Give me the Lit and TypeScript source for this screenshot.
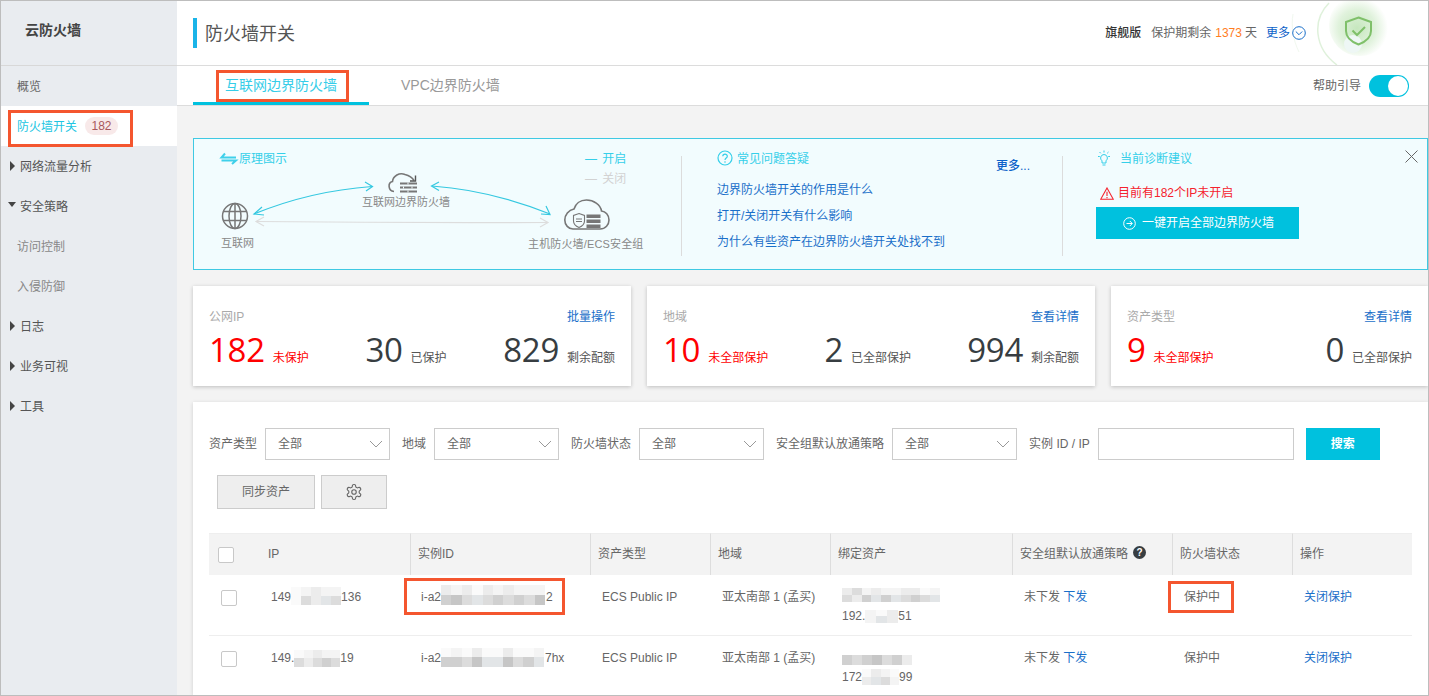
import { LitElement, html, css, svg } from "lit";
import { customElement } from "lit/decorators.js";

const mosaic = (w: number, h: number, rows: string[][], dy = 0) => html`<span class="mosaic" style="width:${w}px;height:${h}px;transform:translateY(${dy}px);grid-template-columns:repeat(${rows[0].length},1fr)">${rows.flat().map((c) => html`<i style="background:${c}"></i>`)}</span>`;

const chevron = html`<svg class="chev" viewBox="0 0 14 8" width="14" height="8"><path d="M1 1l6 6 6-6" fill="none" stroke="#999" stroke-width="1"/></svg>`;

const diagram = svg`
  <path d="M225 153.5 L221.5 157.5 H236" fill="none" stroke="#3fd0ea" stroke-width="2"/>
  <path d="M221.5 160.5 H236 L232 164" fill="none" stroke="#3fd0ea" stroke-width="2"/>
  <g fill="none" stroke="#777" stroke-width="1.5">
    <circle cx="235" cy="216" r="12.5"/>
    <ellipse cx="235" cy="216" rx="6" ry="12.5"/>
    <path d="M235 203.5V228.5M223 211.5H247M223 220.5H247"/>
  </g>
  <path d="M394 191.5C388 191 387.5 182.5 392.5 181.5C393 176 399.5 172 405 174.5C409 175.5 412 177 414 180.5" fill="none" stroke="#777" stroke-width="1.6"/>
  <path d="M415.5 175.5V181H410" fill="none" stroke="#555" stroke-width="1.4"/>
  <path d="M400 183.5H417M400 187.5H417M400 191.5H417" stroke="#777" stroke-width="1.8"/>
  <path d="M408 182.5V184.5M403.5 186.5V188.5M412 186.5V188.5M408 190.5V192.5" stroke="#f2fcfe" stroke-width="1"/>
  <g fill="none" stroke="#35c8e0" stroke-width="1.2">
    <path d="M254 214Q310 191 372 186.5"/><path d="M365 182L372.5 186.5L366 191"/><path d="M262 207L254 214L264 215"/>
    <path d="M432 186Q490 190 550 214"/><path d="M439 182L431.5 186L439 190.5"/><path d="M541 214L550 214.5L546 206"/>
  </g>
  <g fill="none" stroke="#ddd" stroke-width="1.2">
    <path d="M256 221.5Q400 223 548 222.5"/><path d="M264 217L256 221.5L264 226"/><path d="M540 218L548 222.5L540 227"/>
  </g>
  <path d="M573 229H600C605.5 229 609 224.5 609 220C609 215 605.5 211.5 601.5 211C600.5 204.5 593.5 200 586.5 200C580 200 575.5 204 574 209C568.5 210 564.8 215 564.8 220C564.8 225 568.5 229 573 229Z" fill="none" stroke="#777" stroke-width="1.6"/>
  <path d="M579 213.5L584.5 215.5V221C584.5 224.5 581.5 226.5 579 227.5C576.5 226.5 573.5 224.5 573.5 221V215.5Z" fill="none" stroke="#777" stroke-width="1.1"/>
  <path d="M576 219H582M576 221.5H582" stroke="#777" stroke-width="1"/>
  <path d="M586.5 214.5H600.5V218H586.5ZM586.5 219.5H600.5V223H586.5ZM586.5 224.5H600.5V228H586.5Z" fill="#777"/>
`;

type Stat = { n: string; t: string; red?: boolean };

@customElement("app-root")
export class AppRoot extends LitElement {
  static styles = css`
    :host { display: flex; position: relative; width: 1429px; height: 696px; box-sizing: border-box; border: 1px solid #bdbdbd; overflow: hidden; background: #f3f3f3; font: 12px/18px "Liberation Sans", "Noto Sans CJK SC", sans-serif; color: #666; }
    * { box-sizing: border-box; }
    a { color: #1a6fc9; text-decoration: none; }
    svg { display: block; flex: none; }

    .side { width: 176px; flex: none; background: #e9ecf0; }
    .brand { height: 65px; border-bottom: 1px solid #d8d8d8; padding: 19px 0 0 24px; font-size: 14px; font-weight: 700; color: #444; line-height: 20px; }
    .nav { height: 40px; display: flex; align-items: center; padding: 2px 0 0 16px; color: #666; }
    .nav.sub { color: #888; }
    .nav.on { background: #fff; color: #20c5e2; }
    .nav.tree { padding-left: 9px; color: #555; }
    .caret-r { border-left: 5px solid #444; border-top: 5px solid transparent; border-bottom: 5px solid transparent; margin: -2px 5px 0 0; }
    .caret-d { border-top: 5px solid #444; border-left: 4px solid transparent; border-right: 4px solid transparent; margin: -6px 4px 0 -2px; }
    .badge { margin: -2px 0 0 8px; width: 33px; height: 18px; border-radius: 9px; background: #f8e9e9; color: #a8585c; text-align: center; font-size: 12px; }

    .main { flex: 1; min-width: 0; display: flex; flex-direction: column; }
    .head { height: 65px; flex: none; position: relative; background: #fff; border-bottom: 1px solid #dcdcdc; display: flex; align-items: center; padding: 0 122px 1px 16px; }
    .bar { width: 4px; height: 30px; background: #1ab4e8; margin-right: 8px; }
    .title { font-size: 18px; color: #555; flex: 1; line-height: 30px; padding-top: 2px; }
    .ver { color: #333; font-weight: 500; margin-right: 10px; }
    .days { color: #ff7d1f; margin: 0 3px 0 4px; }
    .more { margin: 0 2px 0 9px; color: #0d62c9; position: relative; z-index: 1; }
    .icon-more { position: relative; z-index: 1; }
    .shield { position: absolute; right: 0; top: 0; }

    .tabs { height: 40px; flex: none; background: #fff; border-bottom: 1px solid #dcdcdc; display: flex; padding: 0 19px 0 16px; }
    .tab { height: 39px; padding: 2px 32px 0; display: flex; align-items: center; font-size: 14px; color: #999; border-bottom: 3px solid transparent; }
    .tab.on { color: #35cde8; border-bottom-color: #00c1de; }
    .help { margin-left: auto; display: flex; align-items: center; gap: 8px; }
    .toggle { width: 40px; height: 22px; border-radius: 11px; background: #00c1de; display: flex; justify-content: flex-end; padding: 1px; }
    .toggle i { width: 20px; height: 20px; border-radius: 50%; background: #fff; }

    .body { flex: 1; min-height: 0; padding: 32px 0 0 16px; display: flex; flex-direction: column; gap: 16px; }

    .notice { height: 132px; flex: none; background: #f2fcfe; border: 1px solid #3fc9e3; display: flex; padding-top: 11px; color: #999; }
    .dia { width: 487px; height: 120px; margin-top: -11px; position: relative; flex: none; }
    .dia svg { position: absolute; left: 0; top: 0; }
    .dia span { position: absolute; white-space: nowrap; font-size: 11px; line-height: 14px; color: #888; }
    .dia .h { left: 45px; top: 12px; font-size: 12px; line-height: 16px; color: #35cfe9; }
    .dia .lg1 { left: 391px; top: 12px; font-size: 12px; line-height: 16px; color: #35cfe9; word-spacing: 2px; }
    .dia .lg2 { left: 391px; top: 32px; font-size: 12px; line-height: 16px; color: #d2d2d2; word-spacing: 2px; }
    .dia .l1 { left: 27px; top: 97px; }
    .dia .l2 { left: 168px; top: 56px; }
    .dia .l3 { left: 334px; top: 98px; letter-spacing: .15px; }
    .vline { width: 1px; height: 100px; margin-top: 6px; background: #dcdcdc; flex: none; }
    .faq { width: 380px; flex: none; padding: 0 32px 0 35px; }
    .hd { display: flex; align-items: flex-start; height: 16px; line-height: 18px; color: #35cfe9; }
    .hd svg { margin-right: 4px; }
    .hd .bulb { margin: 0 9px 0 1px; }
    .moreq { margin: 7px 0 0 auto; color: #0d62c9; font-weight: 500; }
    .links { display: flex; flex-direction: column; gap: 8px; margin-top: 15px; }
    .diag { padding-left: 33px; width: 240px; flex: none; }
    .warn { display: flex; align-items: center; gap: 4px; color: #f5222d; margin: 18px 0 0 4px; height: 18px; }
    .fix { margin-top: 5px; width: 203px; height: 32px; background: #00c1de; color: #fff; display: flex; align-items: center; padding-left: 27px; gap: 6px; }
    .close { margin: 0 9px 0 auto; }

    .stats { display: flex; gap: 16px; flex: none; height: 100px; }
    .card { background: #fff; box-shadow: 0 1px 4px rgba(0,0,0,.22); padding: 22px 16px 0; }
    .c1 { width: 438px; } .c2 { width: 448px; } .c3 { width: 317px; flex: 1; }
    .ct { display: flex; justify-content: space-between; color: #aaa; height: 18px; }
    .nums { display: flex; justify-content: space-between; margin-top: 3px; }
    .num { display: flex; align-items: baseline; gap: 8px; color: #555; white-space: nowrap; }
    .num b { font: 400 33px/42px "Open Sans", sans-serif; letter-spacing: -.3px; color: #373d41; }
    .num.red, .num.red b { color: #f00; }

    .table { flex: 1; min-height: 0; background: #fff; box-shadow: 0 1px 4px rgba(0,0,0,.15); padding: 26px 16px 0; overflow: hidden; }
    .filters { display: flex; gap: 12px; align-items: center; height: 32px; white-space: nowrap; }
    .fld { display: flex; gap: 8px; align-items: center; }
    .sel { width: 125px; height: 32px; border: 1px solid #ccc; display: flex; align-items: center; justify-content: space-between; padding: 0 6px 0 12px; background: #fff; }
    .inp { width: 196px; height: 32px; border: 1px solid #ccc; background: #fff; }
    .go { width: 74px; height: 32px; background: #00c1de; color: #fff; font-weight: 700; display: flex; align-items: center; justify-content: center; }
    .acts { display: flex; gap: 6px; margin: 15px 0 0 8px; }
    .btn { height: 34px; width: 98px; background: #eee; border: 1px solid #ccc; display: flex; align-items: center; justify-content: center; color: #666; }
    .btn.g { width: 66px; }
    .grid { display: grid; grid-template-columns: 51px 150px 180px 120px 120px 182px 160px 120px 120px; margin-top: 24px; }
    .th { height: 42px; background: #f3f3f3; border-top: 1px solid #eee; border-left: 1px solid #ddd; padding: 0 0 2px 7px; display: flex; align-items: center; color: #666; gap: 5px; }
    .th.first { border-left: 0; padding: 0 0 0 9px; }
    .th.ip { border-left: 0; padding-left: 8px; }
    .td { height: 61px; border-bottom: 1px solid #eee; padding: 13px 0 0 12px; color: #666; }
    .td.ck { padding-left: 12px; padding-top: 15px; }
    .td.ipc, .td.idc { padding-left: 11px; }
    .ln { display: flex; align-items: center; height: 18px; white-space: nowrap; }
    .ln + .ln { margin-top: 1px; }
    .gap { margin-left: 1px; }
    .cb { width: 16px; height: 16px; border: 1px solid #c8c8c8; border-radius: 2px; background: #fff; }
    .mosaic { display: inline-grid; flex: none; grid-auto-rows: 1fr; }
    .mosaic i { display: block; }
    .qm { width: 13px; height: 13px; border-radius: 50%; background: #373d41; color: #fff; font: 700 10px/13px "Liberation Sans", sans-serif; text-align: center; margin-top: -3px; }

    .mark { position: absolute; border: 3px solid #f4562f; pointer-events: none; }
    .m1 { left: 215px; top: 69px; width: 133px; height: 32px; }
    .m2 { left: 7px; top: 109px; width: 125px; height: 37px; }
    .m3 { left: 403px; top: 577px; width: 161px; height: 37px; }
    .m4 { left: 1167px; top: 580px; width: 66px; height: 32px; }
  `;

  private stat(s: Stat) {
    return html`<div class="num ${s.red ? "red" : ""}"><b>${s.n}</b><span>${s.t}</span></div>`;
  }

  render() {
    const g1 = "#f4f4f4", g2 = "#ececec", d1 = "#dcdcdc", d2 = "#d0d0d0", d3 = "#e2e5e7", d4 = "#c6c6c6", w = "#fafafa";
    const rows = [
      {
        ip: html`149${mosaic(50, 18, [[w, g1, g2, g1, g1], [w, d1, g2, d3, d1]], -1)}136`,
        id: html`i-a2${mosaic(104, 20, [[g2, g1, g2, w, g2, g1, g2, g1, g1, g1], [d2, d4, d1, d3, d1, d2, d1, d2, d1, d4]], -2)}<span class="gap">2</span>`,
        b1: mosaic(98, 14, [[g2, d1, g1, g2, g1, g1, g2, g2, w, g1], [d1, g2, d2, d3, d2, d3, d1, d2, d1, d3]], -2),
        b2: html`192.${mosaic(33, 13, [[g1, w, g2], [g1, d3, g2]], 0)}51`,
      },
      {
        ip: html`149.${mosaic(46, 17, [[w, g1, g2, g1, g1], [d1, g2, d1, d2, d1]], 0)}19`,
        id: html`i-a2${mosaic(103, 19, [[w, g1, w, g2, w, w, g2, w, w, g1], [d2, d2, d1, d4, d3, d3, d4, d1, d2, d3]], -1)}<span class="gap">7hx</span>`,
        b1: mosaic(70, 10, [[d2, d1, d2, d4, d1, d2, g2]], 2),
        b2: html`172${mosaic(37, 16, [[w, g2, g1, w], [g2, d3, d1, g1]], 0)}99`,
      },
    ];
    return html`
      <aside class="side">
        <div class="brand">云防火墙</div>
        <div class="nav">概览</div>
        <div class="nav on">防火墙开关<span class="badge">182</span></div>
        <div class="nav tree"><span class="caret-r"></span>网络流量分析</div>
        <div class="nav tree"><span class="caret-d"></span>安全策略</div>
        <div class="nav sub">访问控制</div>
        <div class="nav sub">入侵防御</div>
        <div class="nav tree"><span class="caret-r"></span>日志</div>
        <div class="nav tree"><span class="caret-r"></span>业务可视</div>
        <div class="nav tree"><span class="caret-r"></span>工具</div>
      </aside>
      <div class="main">
        <header class="head">
          <span class="bar"></span>
          <span class="title">防火墙开关</span>
          <svg class="shield" viewBox="1288 1 140 64" width="140" height="64">
            <defs><radialGradient id="glow" cx=".45" cy=".55"><stop offset="0" stop-color="#c6e7be"/><stop offset=".6" stop-color="#e0f2dc"/><stop offset="1" stop-color="#fff"/></radialGradient></defs>
            <path d="M1293 14C1291 26 1293 40 1299 52" fill="none" stroke="#f1f8ef"/>
            <path d="M1329 3C1312 20 1314 48 1337 65" fill="none" stroke="#dff1db" stroke-width="1.5"/>
            <circle cx="1360" cy="25" r="31" fill="url(#glow)"/>
            <circle cx="1353" cy="44" r="9" fill="#eef7f5"/>
            <path d="M1358.5 17.5L1371 22V31C1371 37.5 1365 42 1358.5 44.5C1352 42 1346 37.5 1346 31V22Z" fill="none" stroke="#7fc06a" stroke-width="2"/>
            <path d="M1352.5 30.5L1357 35L1365 27" fill="none" stroke="#7fc06a" stroke-width="2"/>
          </svg>
          <span class="ver">旗舰版</span>
          <span>保护期剩余</span><span class="days">1373</span><span>天</span>
          <a class="more">更多</a>
          <svg class="icon-more" viewBox="0 0 14 14" width="14" height="14"><circle cx="7" cy="7" r="6.3" fill="#fff" stroke="#1a6fc9"/><path d="M3.8 5.5L7 8.7l3.2-3.2" fill="none" stroke="#1a6fc9"/></svg>
        </header>
        <nav class="tabs">
          <div class="tab on">互联网边界防火墙</div>
          <div class="tab">VPC边界防火墙</div>
          <div class="help">帮助引导<div class="toggle"><i></i></div></div>
        </nav>
        <div class="body">
          <section class="notice">
            <div class="dia">
              <svg viewBox="194 139 487 130" width="487" height="130">${diagram}</svg>
              <span class="h">原理图示</span>
              <span class="lg1">— 开启</span>
              <span class="lg2">— 关闭</span>
              <span class="l1">互联网</span>
              <span class="l2">互联网边界防火墙</span>
              <span class="l3">主机防火墙/ECS安全组</span>
            </div>
            <div class="vline"></div>
            <div class="faq">
              <div class="hd">
                <svg viewBox="0 0 16 16" width="16" height="16"><circle cx="8" cy="8" r="7" fill="none" stroke="#35cfe9" stroke-width="1.2"/><path d="M5.8 6.3C5.8 3.5 10.3 3.5 10.3 6.2C10.3 8 8 8 8 10" fill="none" stroke="#35cfe9" stroke-width="1.2"/><circle cx="8" cy="12" r=".8" fill="#35cfe9"/></svg>
                <span>常见问题答疑</span>
                <a class="moreq">更多...</a>
              </div>
              <div class="links">
                <a>边界防火墙开关的作用是什么</a>
                <a>打开/关闭开关有什么影响</a>
                <a>为什么有些资产在边界防火墙开关处找不到</a>
              </div>
            </div>
            <div class="vline"></div>
            <div class="diag">
              <div class="hd">
                <svg class="bulb" viewBox="0 0 14 16" width="14" height="16"><path d="M7 4.5A3.5 3.5 0 0 0 5 10.8V13H9V10.8A3.5 3.5 0 0 0 7 4.5ZM5.5 15H8.5M7 .5V2.5M1 6.5H2.8M11.2 6.5H13M2.5 2L3.8 3.3M11.5 2L10.2 3.3" fill="none" stroke="#35cfe9"/></svg>
                <span>当前诊断建议</span>
              </div>
              <div class="warn">
                <svg viewBox="0 0 14 13" width="14" height="13"><path d="M7 1L13.3 12.3H.7Z" fill="none" stroke="#f5222d" stroke-width="1.1"/><path d="M7 4.7V9M7 10V11.2" stroke="#f5222d" stroke-width="1.1"/></svg>
                目前有182个IP未开启
              </div>
              <div class="fix">
                <svg viewBox="0 0 13 13" width="13" height="13"><circle cx="6.5" cy="6.5" r="5.8" fill="none" stroke="#fff"/><path d="M3.5 6.5H9M6.8 4L9.3 6.5L6.8 9" fill="none" stroke="#fff"/></svg>
                一键开启全部边界防火墙
              </div>
            </div>
            <svg class="close" viewBox="0 0 13 13" width="13" height="13"><path d="M.5.5L12.5 12.5M12.5.5L.5 12.5" stroke="#666"/></svg>
          </section>

          <section class="stats">
            <div class="card c1">
              <div class="ct"><span>公网IP</span><a>批量操作</a></div>
              <div class="nums">${this.stat({ n: "182", t: "未保护", red: true })}${this.stat({ n: "30", t: "已保护" })}${this.stat({ n: "829", t: "剩余配额" })}</div>
            </div>
            <div class="card c2">
              <div class="ct"><span>地域</span><a>查看详情</a></div>
              <div class="nums">${this.stat({ n: "10", t: "未全部保护", red: true })}${this.stat({ n: "2", t: "已全部保护" })}${this.stat({ n: "994", t: "剩余配额" })}</div>
            </div>
            <div class="card c3">
              <div class="ct"><span>资产类型</span><a>查看详情</a></div>
              <div class="nums">${this.stat({ n: "9", t: "未全部保护", red: true })}${this.stat({ n: "0", t: "已全部保护" })}</div>
            </div>
          </section>

          <section class="table">
            <div class="filters">
              <div class="fld">资产类型<div class="sel">全部${chevron}</div></div>
              <div class="fld">地域<div class="sel">全部${chevron}</div></div>
              <div class="fld">防火墙状态<div class="sel">全部${chevron}</div></div>
              <div class="fld">安全组默认放通策略<div class="sel">全部${chevron}</div></div>
              <div class="fld">实例 ID / IP<div class="inp"></div></div>
              <div class="go">搜索</div>
            </div>
            <div class="acts">
              <div class="btn">同步资产</div>
              <div class="btn g"><svg viewBox="0 0 24 24" width="18" height="18" fill="none" stroke="#666" stroke-width="1.5"><path d="M12.22 2h-.44a2 2 0 0 0-2 2v.18a2 2 0 0 1-1 1.73l-.43.25a2 2 0 0 1-2 0l-.15-.08a2 2 0 0 0-2.73.73l-.22.38a2 2 0 0 0 .73 2.73l.15.1a2 2 0 0 1 1 1.72v.51a2 2 0 0 1-1 1.74l-.15.09a2 2 0 0 0-.73 2.73l.22.38a2 2 0 0 0 2.73.73l.15-.08a2 2 0 0 1 2 0l.43.25a2 2 0 0 1 1 1.73V20a2 2 0 0 0 2 2h.44a2 2 0 0 0 2-2v-.18a2 2 0 0 1 1-1.73l.43-.25a2 2 0 0 1 2 0l.15.08a2 2 0 0 0 2.73-.73l.22-.39a2 2 0 0 0-.73-2.73l-.15-.08a2 2 0 0 1-1-1.74v-.5a2 2 0 0 1 1-1.74l.15-.09a2 2 0 0 0 .73-2.73l-.22-.38a2 2 0 0 0-2.73-.73l-.15.08a2 2 0 0 1-2 0l-.43-.25a2 2 0 0 1-1-1.73V4a2 2 0 0 0-2-2z"/><circle cx="12" cy="12" r="3"/></svg></div>
            </div>
            <div class="grid">
              <div class="th first"><div class="cb"></div></div>
              <div class="th ip">IP</div>
              <div class="th">实例ID</div>
              <div class="th">资产类型</div>
              <div class="th">地域</div>
              <div class="th">绑定资产</div>
              <div class="th">安全组默认放通策略<span class="qm">?</span></div>
              <div class="th">防火墙状态</div>
              <div class="th">操作</div>
              ${rows.map((r) => html`
                <div class="td ck"><div class="cb"></div></div>
                <div class="td ipc"><div class="ln">${r.ip}</div></div>
                <div class="td idc"><div class="ln">${r.id}</div></div>
                <div class="td"><div class="ln">ECS Public IP</div></div>
                <div class="td"><div class="ln">亚太南部 1 (孟买)</div></div>
                <div class="td"><div class="ln">${r.b1}</div><div class="ln">${r.b2}</div></div>
                <div class="td"><div class="ln">未下发&nbsp;<a>下发</a></div></div>
                <div class="td"><div class="ln">保护中</div></div>
                <div class="td"><div class="ln"><a>关闭保护</a></div></div>
              `)}
            </div>
          </section>
        </div>
      </div>
      <div class="mark m1"></div>
      <div class="mark m2"></div>
      <div class="mark m3"></div>
      <div class="mark m4"></div>
    `;
  }
}
